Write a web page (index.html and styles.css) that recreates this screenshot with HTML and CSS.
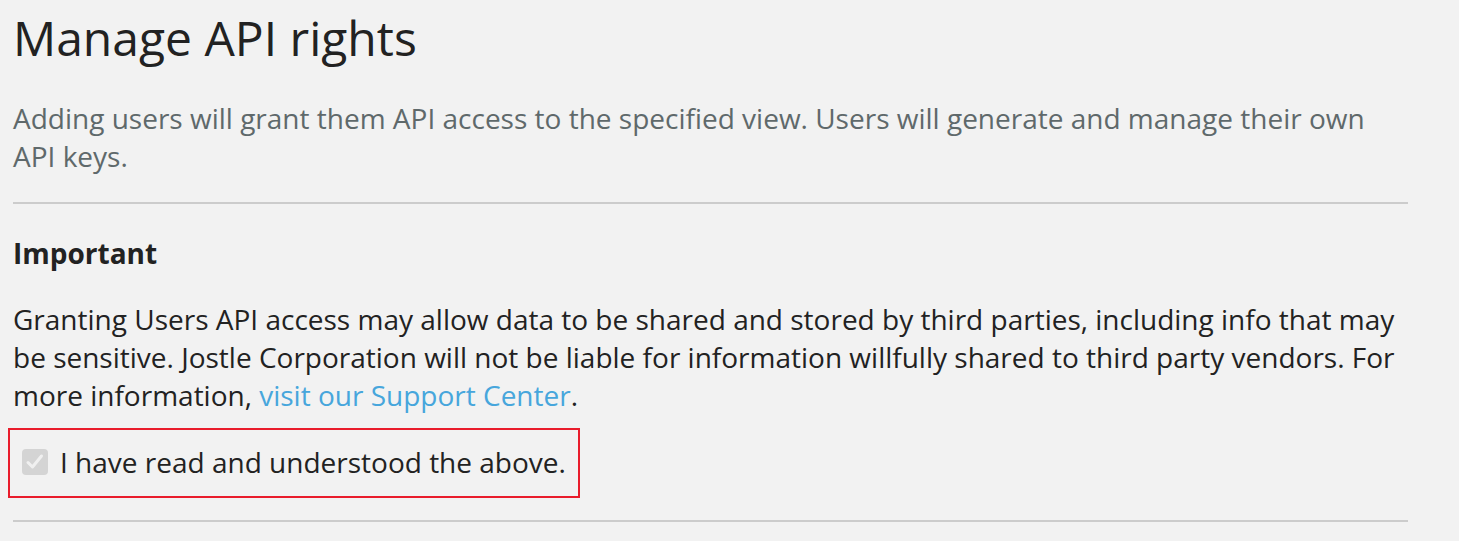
FILE: index.html
```html
<!DOCTYPE html>
<html lang="en">
<head>
<meta charset="utf-8">
<title>Manage API rights</title>
<link rel="stylesheet" href="styles.css">
</head>
<body>
<main class="page">
  <h1 class="title">Manage API rights</h1>
  <p class="lead">Adding users will grant them API access to the specified view. Users will generate and manage their own API keys.</p>
  <hr class="divider">
  <h2 class="subtitle">Important</h2>
  <p class="body">Granting Users API access may allow data to be shared and stored by third parties, including info that may be sensitive. Jostle Corporation will not be liable for information willfully shared to third party vendors. For more information, <a class="link" href="#">visit our Support Center</a>.</p>
  <label class="confirm">
    <span class="check" aria-hidden="true">
      <svg viewBox="0 0 26 26" width="26" height="26"><path d="M6 13.5 L10.5 18 L19.5 7" fill="none" stroke="#f0f0f0" stroke-width="3" stroke-linecap="round" stroke-linejoin="round"/></svg>
    </span>
    <span class="confirm-text">I have read and understood the above.</span>
  </label>
  <hr class="divider divider-bottom">
</main>
</body>
</html>
```

FILE: styles.css
```css
html, body {
  margin: 0;
  padding: 0;
  background: #f2f2f2;
}

body {
  font-family: "Open Sans", "Noto Sans", sans-serif;
  color: #222222;
}

.page {
  width: 1395px;
  margin-left: 13px;
  padding-top: 10px;
}

.title {
  margin: 0;
  font-size: 48px;
  line-height: 56px;
  font-weight: 400;
  color: #222222;
}

.lead {
  margin: 33px 0 0;
  font-size: 28px;
  line-height: 38px;
  color: #5f696b;
}

.divider {
  border: 0;
  height: 2px;
  background: #cccccc;
  margin: 27px 0 0;
}

.subtitle {
  margin: 30px 0 0;
  font-size: 28px;
  line-height: 38px;
  font-weight: 700;
}

.body {
  margin: 28px 0 0;
  font-size: 28px;
  line-height: 38px;
}

.link {
  color: #47a6dc;
  text-decoration: none;
}

.confirm {
  display: inline-flex;
  align-items: center;
  gap: 12px;
  margin: 14px 0 0 -5px;
  padding: 13px 12px 15px 12px;
  border: 2px solid #e91c2b;
  font-size: 28px;
  line-height: 38px;
}

.check {
  display: block;
  width: 26px;
  height: 26px;
  border-radius: 4px;
  background: #d4d4d4;
}

.check svg {
  display: block;
}

.divider-bottom {
  margin-top: 22px;
}
```
